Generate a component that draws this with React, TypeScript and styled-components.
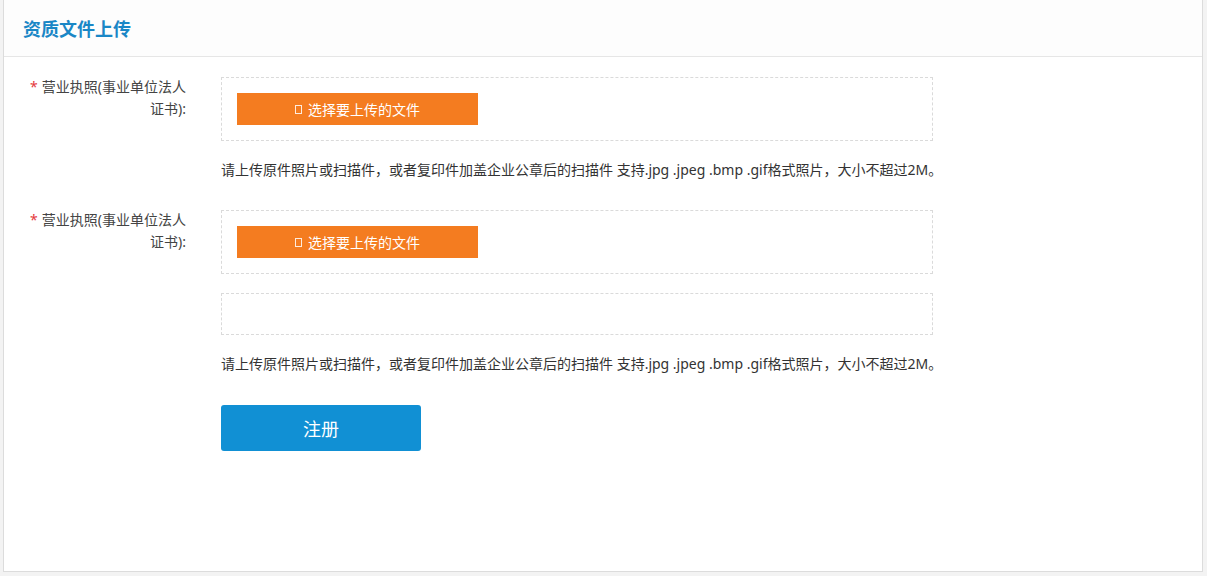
import React from 'react';
import styled, { createGlobalStyle } from 'styled-components';

const GlobalStyle = createGlobalStyle`
  html, body {
    margin: 0;
    padding: 0;
    background: #f3f3f3;
    font-family: "Noto Sans", "Noto Sans CJK SC", sans-serif;
  }
`;

const Panel = styled.div`
  box-sizing: border-box;
  margin: 0 4px 0 3px;
  width: 1200px;
  height: 572px;
  background: #fff;
  border: 1px solid #dcdcdc;
  border-top: none;
`;

const Header = styled.div`
  box-sizing: border-box;
  height: 57px;
  padding: 0 19px;
  display: flex;
  align-items: center;
  background: #fdfdfd;
  border-bottom: 1px solid #e6e6e6;
`;

const Title = styled.h2`
  margin: 0;
  font-size: 18px;
  font-weight: bold;
  color: #1a87c6;
`;

const Body = styled.div`
  padding-top: 20px;
`;

const Row = styled.div<{ $gap?: number }>`
  display: flex;
  align-items: flex-start;
  margin-top: ${(p) => p.$gap ?? 0}px;
`;

const Label = styled.div`
  box-sizing: border-box;
  width: 182px;
  margin-right: 35px;
  padding-left: 26px;
  text-align: right;
  font-size: 14px;
  line-height: 22px;
  color: #444;
  margin-top: -1px;
`;

const Star = styled.span`
  color: #e4393c;
  margin-right: 4px;
`;

const Field = styled.div`
  display: flex;
  flex-direction: column;
`;

const UploadBox = styled.div<{ $empty?: boolean }>`
  box-sizing: border-box;
  width: 712px;
  height: ${(p) => (p.$empty ? 42 : 64)}px;
  margin-top: ${(p) => (p.$empty ? 19 : 0)}px;
  padding: 15px;
  border: 1px dashed #dadada;
`;

const PickButton = styled.button`
  width: 241px;
  height: 32px;
  border: none;
  border-radius: 0;
  background: #f47c20;
  color: #fff;
  font-family: inherit;
  font-size: 14px;
  display: flex;
  align-items: center;
  justify-content: center;
  gap: 6px;
  padding: 0;
  cursor: pointer;
`;

const Tofu = styled.span`
  display: inline-block;
  box-sizing: border-box;
  width: 7px;
  height: 9px;
  border: 1px solid rgba(255, 255, 255, 0.85);
`;

const Hint = styled.p`
  margin: 18px 0 0;
  font-size: 14px;
  line-height: 22px;
  color: #333;
  white-space: nowrap;
`;

const Submit = styled.button`
  margin-top: 30px;
  width: 200px;
  height: 46px;
  border: none;
  border-radius: 3px;
  background: #1190d4;
  color: #fff;
  font-family: inherit;
  font-size: 18px;
  cursor: pointer;
`;

const HINT =
  '请上传原件照片或扫描件，或者复印件加盖企业公章后的扫描件 支持.jpg .jpeg .bmp .gif格式照片，大小不超过2M。';

const Picker = () => (
  <UploadBox>
    <PickButton type="button">
      <Tofu />
      选择要上传的文件
    </PickButton>
  </UploadBox>
);

const App = () => {
  return (
    <>
      <GlobalStyle />
      <Panel>
        <Header>
          <Title>资质文件上传</Title>
        </Header>
        <Body>
          <Row>
            <Label>
              <Star>*</Star>营业执照(事业单位法人证书):
            </Label>
            <Field>
              <Picker />
              <Hint>{HINT}</Hint>
            </Field>
          </Row>
          <Row $gap={29}>
            <Label>
              <Star>*</Star>营业执照(事业单位法人证书):
            </Label>
            <Field>
              <Picker />
              <UploadBox $empty />
              <Hint>{HINT}</Hint>
              <Submit type="button">注册</Submit>
            </Field>
          </Row>
        </Body>
      </Panel>
    </>
  );
};

export default App;
